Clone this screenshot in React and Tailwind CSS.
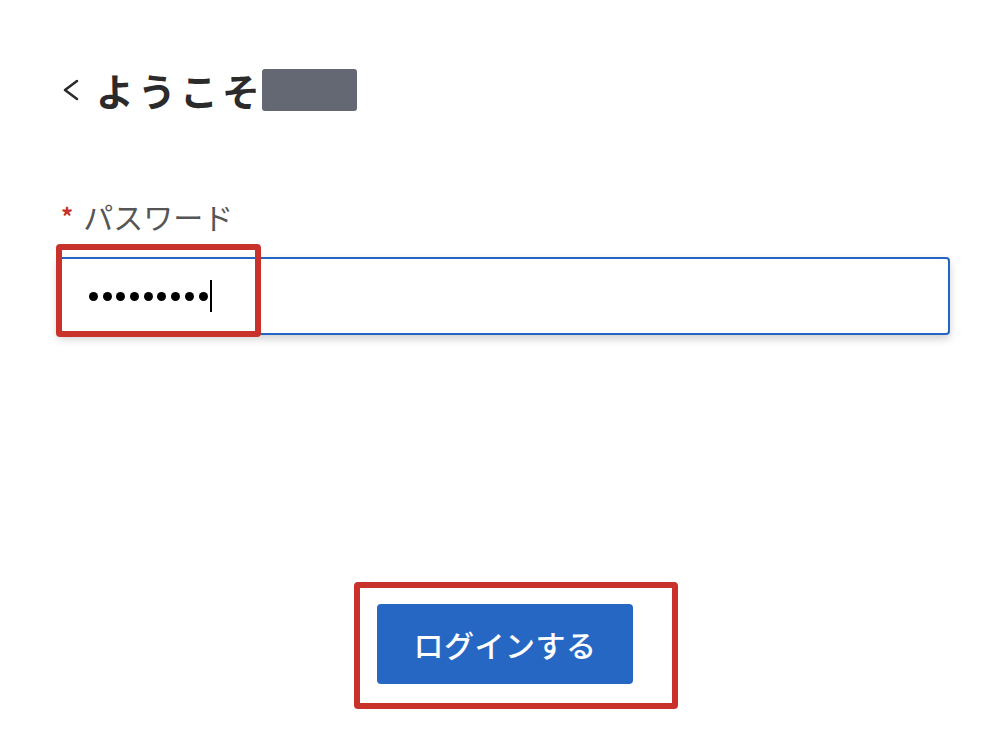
// App.jsx — password login step with annotated highlights

const font = { fontFamily: '"Noto Sans CJK JP", "Noto Sans", sans-serif' };

const BackChevron = () => (
  <svg width="18" height="22" viewBox="0 0 18 22" fill="none" className="shrink-0">
    <path d="M15 2 L3 11 L15 20" stroke="#2b2b2b" strokeWidth="2.6" strokeLinecap="round" strokeLinejoin="round" />
  </svg>
);

const App = () => {
  const dots = Array.from({ length: 9 });

  return (
    <div className="w-[998px] h-[752px] bg-white relative overflow-hidden" style={font}>
      {/* Header */}
      <div className="flex items-center pl-[62px] pt-[69px]">
        <BackChevron />
        <h1 className="ml-[16px] text-[38px] font-bold text-[#2b2b2b] leading-[42px] tracking-[4px]">ようこそ</h1>
        <div className="ml-[-2px] w-[95px] h-[42px] rounded-[3px] bg-[#636872]" />
      </div>

      {/* Password field */}
      <div className="pl-[57px] pr-[48px] mt-[87px]">
        <label className="flex items-center gap-[10px] pl-[4px] text-[30px] leading-[36px] text-[#555555]">
          <span className="text-[#c8322a] font-bold text-[24px]">*</span>
          <span>パスワード</span>
        </label>
        <div className="mt-[23px] h-[78px] rounded-[4px] border-2 border-[#2565c2] bg-white shadow-[0_4px_8px_rgba(0,0,0,0.18)] flex items-center pl-[30px]">
          <div className="flex items-center gap-[4.7px]">
            {dots.map((_, i) => (
              <span key={i} className="w-[9px] h-[9px] rounded-full bg-black" />
            ))}
          </div>
          <span className="ml-[2px] w-[2px] h-[32px] bg-black" />
        </div>
      </div>

      {/* Submit */}
      <div className="flex justify-center mt-[269px] pl-[12px]">
        <button className="w-[256px] h-[80px] rounded-[4px] bg-[#2667c4] text-white text-[30px] font-medium tracking-[0.5px]">
          ログインする
        </button>
      </div>

      {/* Annotation boxes */}
      <div className="absolute left-[56px] top-[244px] w-[205px] h-[93px] border-[6px] border-[#c8322a] rounded-[4px]" />
      <div className="absolute left-[354px] top-[582px] w-[324px] h-[127px] border-[6px] border-[#c8322a] rounded-[4px]" />
    </div>
  );
};

export default App;
